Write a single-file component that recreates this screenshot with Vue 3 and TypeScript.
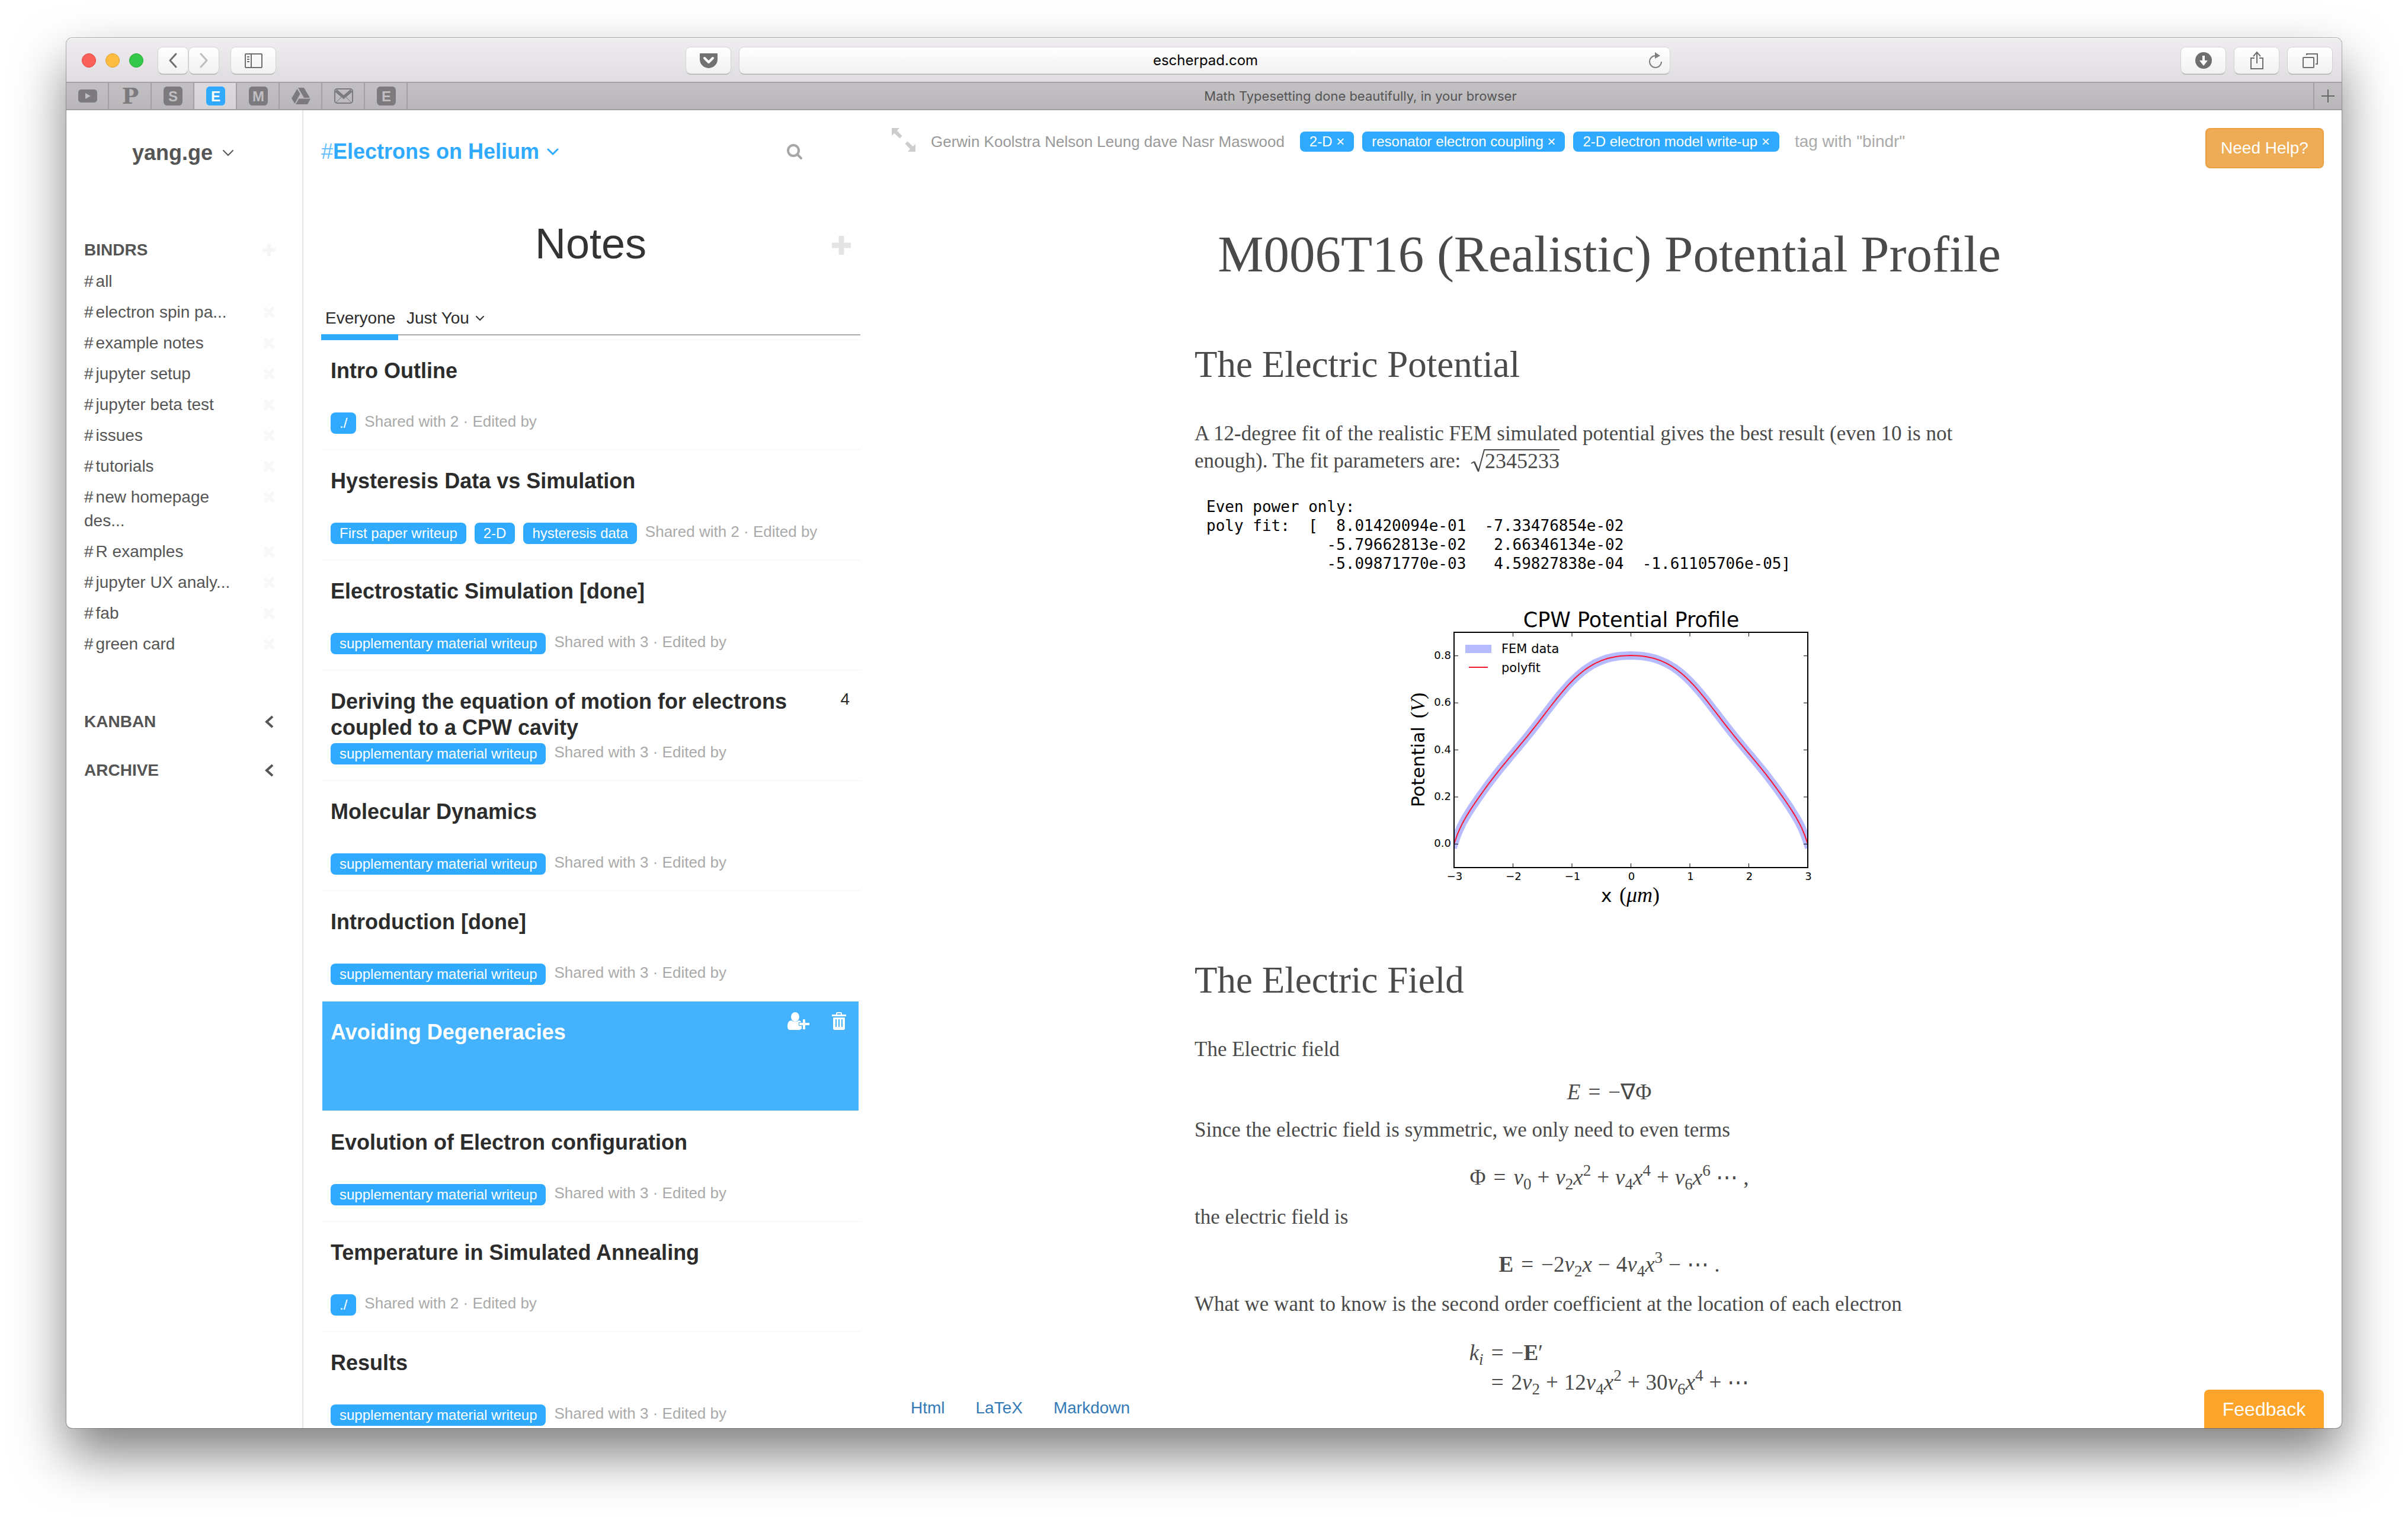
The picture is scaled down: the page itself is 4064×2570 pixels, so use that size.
<script setup lang="ts">
interface Bindr {
  name: string
  removable: boolean
}

interface Note {
  title: string
  tags: string[]
  shared?: number
  badge?: number
  selected?: boolean
}

const bindrs: Bindr[] = [
  { name: 'all', removable: false },
  { name: 'electron spin pa...', removable: true },
  { name: 'example notes', removable: true },
  { name: 'jupyter setup', removable: true },
  { name: 'jupyter beta test', removable: true },
  { name: 'issues', removable: true },
  { name: 'tutorials', removable: true },
  { name: 'new homepage des...', removable: true },
  { name: 'R examples', removable: true },
  { name: 'jupyter UX analy...', removable: true },
  { name: 'fab', removable: true },
  { name: 'green card', removable: true },
]

const supplementary = 'supplementary material writeup'

const notes: Note[] = [
  { title: 'Intro Outline', tags: ['./'], shared: 2 },
  { title: 'Hysteresis Data vs Simulation', tags: ['First paper writeup', '2-D', 'hysteresis data'], shared: 2 },
  { title: 'Electrostatic Simulation [done]', tags: [supplementary], shared: 3 },
  {
    title: 'Deriving the equation of motion for electrons coupled to a CPW cavity',
    tags: [supplementary],
    shared: 3,
    badge: 4,
  },
  { title: 'Molecular Dynamics', tags: [supplementary], shared: 3 },
  { title: 'Introduction [done]', tags: [supplementary], shared: 3 },
  { title: 'Avoiding Degeneracies', tags: [], selected: true },
  { title: 'Evolution of Electron configuration', tags: [supplementary], shared: 3 },
  { title: 'Temperature in Simulated Annealing', tags: ['./'], shared: 2 },
  { title: 'Results', tags: [supplementary], shared: 3 },
]

const noteTags: string[] = ['2-D', 'resonator electron coupling', '2-D electron model write-up']

const fitOutput = [
  'Even power only:',
  'poly fit:  [  8.01420094e-01  -7.33476854e-02',
  '             -5.79662813e-02   2.66346134e-02',
  '             -5.09871770e-03   4.59827838e-04  -1.61105706e-05]',
].join('\n')

// Plot geometry, in the figure's own units
const axes = { left: 78, top: 47, width: 597, height: 397 }
const coefficients = [
  8.01420094e-1, -7.33476854e-2, -5.79662813e-2, 2.66346134e-2, -5.0987177e-3, 4.59827838e-4, -1.61105706e-5,
]

function potential(x: number): number {
  return coefficients.reduce((sum, c, i) => sum + c * Math.pow(x, 2 * i), 0)
}

function px(x: number): number {
  return axes.left + ((x + 3) / 6) * axes.width
}

function py(v: number): number {
  return axes.top + (0.9 - v) * axes.height
}

const curve = Array.from({ length: 121 }, (_, i) => {
  const x = -3 + i * 0.05
  return `${px(x).toFixed(1)},${py(potential(x)).toFixed(1)}`
}).join(' ')

const xTicks = [-3, -2, -1, 0, 1, 2, 3]
const yTicks = [0, 0.2, 0.4, 0.6, 0.8]

function tickLabel(n: number): string {
  return n < 0 ? `−${-n}` : `${n}`
}
</script>

<template>
  <div class="desktop">
    <div class="window">
      <header class="toolbar">
        <div class="toolbar-left">
          <div class="lights">
            <span class="light red"></span>
            <span class="light amber"></span>
            <span class="light green"></span>
          </div>
          <div class="history">
            <button class="chrome-btn narrow" aria-label="Back">
              <svg width="16" height="32" viewBox="0 0 16 32" fill="none" stroke="#6e6e6e" stroke-width="3" stroke-linecap="round" stroke-linejoin="round"><path d="M13 5 3 16l10 11" /></svg>
            </button>
            <button class="chrome-btn narrow" aria-label="Forward">
              <svg width="16" height="32" viewBox="0 0 16 32" fill="none" stroke="#bdbdbd" stroke-width="3" stroke-linecap="round" stroke-linejoin="round"><path d="m3 5 10 11L3 27" /></svg>
            </button>
          </div>
          <button class="chrome-btn" aria-label="Show sidebar">
            <svg width="30" height="32" viewBox="0 0 30 32" fill="none" stroke="#6e6e6e" stroke-width="2"><rect x="1" y="5" width="28" height="23" rx="1" /><path d="M11 5v23M4 10h4M4 14h4M4 18h4" /></svg>
          </button>
        </div>
        <div class="toolbar-center">
          <button class="chrome-btn" aria-label="Save to Pocket">
            <svg width="30" height="26" viewBox="0 0 30 26"><path d="M1 1h28a1 1 0 0 1 1 1v9a15 15 0 0 1-30 0V2a1 1 0 0 1 1-1z" fill="#737173" /><path d="m8 9 7 7 7-7" fill="none" stroke="#fff" stroke-width="4" stroke-linecap="round" stroke-linejoin="round" /></svg>
          </button>
          <div class="address">
            <input class="url" type="text" value="escherpad.com" aria-label="Address" />
            <button class="reload" aria-label="Reload">
              <svg width="26" height="28" viewBox="0 0 26 28"><path d="M13 6a10 10 0 1 0 10 10" fill="none" stroke="#808080" stroke-width="2" /><path d="M12 0v11l9-5z" fill="#808080" /></svg>
            </button>
          </div>
        </div>
        <div class="toolbar-right">
          <button class="chrome-btn" aria-label="Downloads">
            <svg width="28" height="28" viewBox="0 0 28 28"><circle cx="14" cy="14" r="14" fill="#6e6e6e" /><path d="M12 6h4v8h5l-7 9-7-9h5z" fill="#fff" /></svg>
          </button>
          <button class="chrome-btn" aria-label="Share">
            <svg width="24" height="32" viewBox="0 0 24 32" fill="none" stroke="#6e6e6e" stroke-width="2"><path d="M8 12H2v18h20V12h-6M12 21V2M6 9l6-7 6 7" /></svg>
          </button>
          <button class="chrome-btn" aria-label="Show all tabs">
            <svg width="26" height="26" viewBox="0 0 26 26" fill="none" stroke="#6e6e6e" stroke-width="2"><rect x="1" y="8" width="18" height="17" rx="1" /><path d="M7 4V2h18v17h-3" /></svg>
          </button>
        </div>
      </header>

      <nav class="tabbar" aria-label="Browser tabs">
        <a href="#" class="pin" aria-label="YouTube">
          <svg width="32" height="22" viewBox="0 0 32 22"><rect width="32" height="22" rx="5" fill="#7c7a7d" /><path d="m12 6 9 5-9 5z" fill="#c0bec1" /></svg>
        </a>
        <a href="#" class="pin"><span class="fav-serif">P</span></a>
        <a href="#" class="pin"><span class="fav">S</span></a>
        <a href="#" class="pin active"><span class="fav blue">E</span></a>
        <a href="#" class="pin"><span class="fav">M</span></a>
        <a href="#" class="pin" aria-label="Drive">
          <svg width="32" height="28" viewBox="0 0 32 28" fill="#7c7a7d"><path d="M11 0h10l10 17H21zM9.500 2l5 8.500L5.500 27 0 18zM12.500 18.500H32L27 28H7z" /></svg>
        </a>
        <a href="#" class="pin" aria-label="Mail">
          <svg width="32" height="26" viewBox="0 0 32 26" fill="none" stroke="#7c7a7d"><rect x="1" y="1" width="30" height="24" rx="4" stroke-width="2" /><path d="m3 4 13 11L29 4" stroke-width="5" /><path d="m3 24 10-10M29 24 19 14" stroke-width="1" /></svg>
        </a>
        <a href="#" class="pin"><span class="fav">E</span></a>
        <a href="#" class="page-tab">Math Typesetting done beautifully, in your browser</a>
        <button class="new-tab" aria-label="New tab">
          <svg width="24" height="24" viewBox="0 0 24 24" stroke="#666" stroke-width="2"><path d="M12 1v22M1 12h22" /></svg>
        </button>
      </nav>

      <main class="workspace">
        <aside class="sidebar">
          <button class="account">
            yang.ge
            <svg width="20" height="12" viewBox="0 0 20 12" fill="none" stroke="#555" stroke-width="2" stroke-linecap="round"><path d="m2 2 8 8 8-8" /></svg>
          </button>
          <div class="section-head">
            <h2>BINDRS</h2>
            <button class="mark" aria-label="Add bindr">
              <svg width="22" height="22" viewBox="0 0 22 22" stroke="#f5f5f5" stroke-width="6" stroke-linecap="round"><path d="M11 3v16M3 11h16" /></svg>
            </button>
          </div>
          <ul class="bindrs">
            <li v-for="b in bindrs" :key="b.name">
              <a href="#"><span class="hash">#</span>{{ b.name }}</a>
              <button v-if="b.removable" class="mark" :aria-label="`Remove ${b.name}`">
                <svg width="20" height="20" viewBox="0 0 20 20" stroke="#f8f8f8" stroke-width="6" stroke-linecap="round"><path d="m4 4 12 12M16 4 4 16" /></svg>
              </button>
            </li>
          </ul>
          <div v-for="name in ['KANBAN', 'ARCHIVE']" :key="name" class="section-head closed">
            <h2>{{ name }}</h2>
            <button class="mark" :aria-label="`Open ${name}`">
              <svg width="14" height="22" viewBox="0 0 14 22" fill="none" stroke="#555" stroke-width="4"><path d="M13 2 3 11l10 9" /></svg>
            </button>
          </div>
        </aside>

        <section class="notes">
          <div class="notes-top">
            <button class="bindr-title">
              <span class="light-hash">#</span>Electrons on Helium
              <svg width="22" height="14" viewBox="0 0 22 14" fill="none" stroke="#2faaff" stroke-width="3" stroke-linecap="round"><path d="m3 3 8 8 8-8" /></svg>
            </button>
            <button class="search" aria-label="Search notes">
              <svg width="28" height="28" viewBox="0 0 28 28" fill="none" stroke="#a6a6a6" stroke-width="4" stroke-linecap="round"><circle cx="12" cy="12" r="9" /><path d="m19 19 6 6" /></svg>
            </button>
          </div>
          <div class="notes-heading">
            <h1>Notes</h1>
            <button class="add-note" aria-label="Add note">
              <svg width="32" height="32" viewBox="0 0 32 32" stroke="#e4e4e4" stroke-width="9" stroke-linejoin="round" fill="none"><path d="M16 0v32M0 16h32" /></svg>
            </button>
          </div>
          <div class="tabs">
            <button class="tab current">Everyone</button>
            <div class="tabs-rest">
              <button class="tab">
                Just You
                <svg width="16" height="12" viewBox="0 0 16 12" fill="none" stroke="#333" stroke-width="2" stroke-linecap="round"><path d="m2 3 6 6 6-6" /></svg>
              </button>
            </div>
          </div>
          <ul class="note-list">
            <li v-for="n in notes" :key="n.title" class="note" :class="{ selected: n.selected }">
              <a href="#" class="note-title">{{ n.title }}</a>
              <div class="note-side">
                <span v-if="n.badge" class="badge">{{ n.badge }}</span>
                <template v-if="n.selected">
                  <button aria-label="Share note">
                    <svg width="38" height="30" viewBox="0 0 38 30" fill="#fff"><ellipse cx="13" cy="8" rx="7" ry="8" /><path d="M7 14c3 3 9 3 12 0 2 0 4 1 4 3h-4v6h5v5q-2 2-5 2H5q-5 0-5-6c0-6 2-10 7-10zM26 12h4v6h7v4h-7v7h-4v-7h-6v-4h6z" /></svg>
                  </button>
                  <button aria-label="Delete note">
                    <svg width="26" height="30" viewBox="0 0 26 30"><path d="M8 4V2q0-2 2-2h6q2 0 2 2v2h7v3H1V4zM3 9h20v18q0 3-3 3H6q-3 0-3-3z" fill="#fff" /><path d="M10 2h6v2h-6z" fill="#44b2fd" /><path d="M8 12v13M13 12v13M18 12v13" stroke="#44b2fd" stroke-width="2" /></svg>
                  </button>
                </template>
              </div>
              <div v-if="n.shared" class="note-meta">
                <span v-for="t in n.tags" :key="t" class="tag small">{{ t }}</span>
                <span class="shared">Shared with {{ n.shared }} · Edited by</span>
              </div>
            </li>
          </ul>
        </section>

        <section class="pane">
          <div class="pane-top">
            <button class="expand" aria-label="Expand">
              <svg width="40" height="40" viewBox="0 0 40 40" fill="#cdcdcd"><path d="M0 0h13L9 4.500l8.500 9-4 4L4.500 9 0 13zM40 40H27l4-4.500-8.500-9 4-4 9 8.500 4.500-4z" /></svg>
            </button>
            <span class="authors">Gerwin Koolstra Nelson Leung dave Nasr Maswood</span>
            <div class="pane-tags">
              <span v-for="t in noteTags" :key="t" class="tag">{{ t }} <button :aria-label="`Remove ${t}`">×</button></span>
            </div>
            <input class="tag-input" type="text" placeholder='tag with "bindr"' aria-label="Add tag" />
            <button class="help">Need Help?</button>
          </div>

          <article class="doc">
            <h1>M006T16 (Realistic) Potential Profile</h1>
            <h2>The Electric Potential</h2>
            <p>
              A 12-degree fit of the realistic FEM simulated potential gives the best result (even 10 is not enough).
              The fit parameters are: <span class="sqrt"><svg width="24" height="40" viewBox="0 0 24 40" fill="none" stroke="#4a4a4a"><path d="m1 24 5-3" stroke-width="2" /><path d="m6 21 7 16" stroke-width="3" /><path d="M13 38 23 1h1" stroke-width="2" /></svg><span class="radicand">2345233</span></span>
            </p>
            <pre>{{ fitOutput }}</pre>

            <svg class="figure" width="700" height="524" viewBox="-10 0 700 524" role="img" aria-label="CPW Potential Profile">
              <defs>
                <clipPath id="plot-area"><rect :x="axes.left" :y="axes.top" :width="axes.width" :height="axes.height" /></clipPath>
              </defs>
              <text x="377" y="38" font-size="35" text-anchor="middle">CPW Potential Profile</text>
              <g clip-path="url(#plot-area)" fill="none">
                <polyline :points="curve" stroke="#b6bcff" stroke-width="14" stroke-linecap="square" />
                <polyline :points="curve" stroke="#ff1530" stroke-width="2" />
              </g>
              <rect :x="axes.left" :y="axes.top" :width="axes.width" :height="axes.height" fill="none" stroke="#000" stroke-width="2" />
              <g v-for="t in xTicks" :key="`x${t}`">
                <path :d="`M${px(t)} 47v7M${px(t)} 444v-7`" stroke="#000" stroke-width="1" />
                <text :x="px(t) + 1" y="465" font-size="18" text-anchor="middle">{{ tickLabel(t) }}</text>
              </g>
              <g v-for="t in yTicks" :key="`y${t}`">
                <path :d="`M78 ${py(t)}h7M675 ${py(t)}h-7`" stroke="#000" stroke-width="1" />
                <text x="73" :y="py(t) + 5" font-size="18" text-anchor="end">{{ t.toFixed(1) }}</text>
              </g>
              <rect x="97" y="68" width="44" height="14" fill="#b6bcff" />
              <path d="M103 106h32" stroke="#ff1530" stroke-width="2" />
              <text x="158" y="82" font-size="21">FEM data</text>
              <text x="158" y="114" font-size="21">polyfit</text>
              <text x="326" y="502" font-size="31">x</text>
              <text x="357" y="502" font-size="36" class="math">(<tspan font-style="italic">μm</tspan>)</text>
              <g transform="translate(28 342) rotate(-90)">
                <text x="0" y="0" font-size="31">Potential</text>
                <text x="150" y="0" font-size="34" class="math">(<tspan font-style="italic">V</tspan>)</text>
              </g>
            </svg>

            <h2 class="after-figure">The Electric Field</h2>
            <p>The Electric field</p>
            <div class="eq first"><i>E</i><b class="op rel">=</b>−∇Φ</div>
            <p>Since the electric field is symmetric, we only need to even terms</p>
            <div class="eq">Φ<b class="op rel">=</b><i>v</i><sub>0</sub><b class="op">+</b><i>v</i><sub>2</sub><i>x</i><sup>2</sup><b class="op">+</b><i>v</i><sub>4</sub><i>x</i><sup>4</sup><b class="op">+</b><i>v</i><sub>6</sub><i>x</i><sup>6</sup> ⋯ ,</div>
            <p>the electric field is</p>
            <div class="eq"><strong>E</strong><b class="op rel">=</b>−2<i>v</i><sub>2</sub><i>x</i><b class="op">−</b>4<i>v</i><sub>4</sub><i>x</i><sup>3</sup><b class="op">−</b>⋯ .</div>
            <p>What we want to know is the second order coefficient at the location of each electron</p>
            <div class="eq aligned">
              <span><i>k</i><sub><i>i</i></sub></span>
              <span><b class="op rel">=</b>−<strong>E</strong>′</span>
              <span></span>
              <span><b class="op rel">=</b>2<i>v</i><sub>2</sub><b class="op">+</b>12<i>v</i><sub>4</sub><i>x</i><sup>2</sup><b class="op">+</b>30<i>v</i><sub>6</sub><i>x</i><sup>4</sup><b class="op">+</b>⋯</span>
            </div>
          </article>

          <nav class="exports" aria-label="Export">
            <a href="#">Html</a>
            <a href="#">LaTeX</a>
            <a href="#">Markdown</a>
          </nav>
          <button class="feedback">Feedback</button>
        </section>
      </main>
    </div>
  </div>
</template>

<style>
body {
  margin: 0;
  background: #fff;
}
</style>

<style scoped>
* {
  box-sizing: border-box;
}

.desktop {
  height: 100vh;
  padding: 64px 112px 160px;
  overflow: hidden;
  background: #fff;
  font-family: "Liberation Sans", Arial, sans-serif;
  font-size: 28px;
  line-height: 40px;
  color: #555;
}

button,
input {
  padding: 0;
  border: 0;
  background: none;
  font: inherit;
  color: inherit;
}

a {
  color: inherit;
  text-decoration: none;
}

h1,
h2,
p,
pre,
ul {
  margin: 0;
  padding: 0;
  list-style: none;
}

svg {
  display: block;
  flex: none;
}

.window {
  display: flex;
  flex-direction: column;
  height: 100%;
  overflow: hidden;
  border-radius: 10px;
  background: #fff;
  box-shadow: 0 0 0 1px rgba(0, 0, 0, 0.28), 0 44px 88px rgba(0, 0, 0, 0.5);
}

/* Browser chrome */
.toolbar {
  display: grid;
  flex: none;
  grid-template-columns: 1046fr 1660fr 1134fr;
  align-items: center;
  height: 74px;
  padding-top: 2px;
  background: linear-gradient(#efedf0, #dfdde0);
  box-shadow: inset 0 2px 0 #f8f7f8;
}

.toolbar-left,
.toolbar-center,
.toolbar-right,
.lights,
.history {
  display: flex;
  align-items: center;
}

.toolbar-left {
  gap: 21px;
  padding-left: 26px;
}

.lights {
  gap: 16px;
  margin-right: 4px;
}

.light {
  width: 24px;
  height: 24px;
  border: 1px solid;
  border-radius: 50%;
}

.red {
  border-color: #e2463f;
  background: #fc605b;
}

.amber {
  border-color: #dfa035;
  background: #fdbc40;
}

.green {
  border-color: #27aa35;
  background: #34c84a;
}

.history {
  gap: 2px;
}

.chrome-btn,
.address {
  display: flex;
  align-items: center;
  justify-content: center;
  height: 44px;
  border-radius: 8px;
  background: linear-gradient(#fff, #f1f1f1);
  box-shadow: 0 0 0 1px #d3d1d4, 0 2px 0 #b0aeb1;
}

.chrome-btn {
  flex: none;
  width: 75px;
}

.chrome-btn.narrow {
  width: 50px;
}

.toolbar-center {
  gap: 15px;
}

.address {
  flex: 1;
  padding: 0 11px 0 40px;
}

.url {
  flex: 1;
  min-width: 0;
  height: 40px;
  font-family: Inter, sans-serif;
  font-size: 24px;
  color: #000;
  text-align: center;
}

.toolbar-right {
  justify-content: flex-end;
  gap: 15px;
  padding-right: 16px;
}

.tabbar {
  display: flex;
  flex: none;
  height: 48px;
  border-top: 2px solid #a4a2a5;
  border-bottom: 2px solid #a2a0a3;
  background: linear-gradient(#c2c0c3, #b9b7ba);
}

.pin {
  display: flex;
  align-items: center;
  justify-content: center;
  width: 72px;
  padding-left: 2px;
  border-right: 2px solid #a2a0a3;
}

.pin.active {
  background: linear-gradient(#dcdadd, #d5d3d6);
}

.fav {
  width: 32px;
  height: 32px;
  border-radius: 6px;
  background: #7c7a7d;
  font-size: 24px;
  font-weight: bold;
  line-height: 33px;
  text-align: center;
  color: #c0bec1;
}

.fav.blue {
  background: #2faaff;
  color: #fff;
}

.fav-serif {
  font-family: "DejaVu Serif", serif;
  font-size: 38px;
  font-weight: bold;
  color: #7c7a7d;
}

.page-tab {
  flex: 1;
  font-family: Inter, sans-serif;
  font-size: 22px;
  line-height: 44px;
  text-align: center;
  color: #555;
}

.new-tab {
  display: flex;
  align-items: center;
  justify-content: center;
  width: 48px;
  border-left: 2px solid #a2a0a3;
}

/* Sidebar */
.workspace {
  display: flex;
  flex: 1;
  min-height: 0;
}

.sidebar {
  flex: none;
  width: 400px;
  padding: 50px 44px 0 30px;
  border-right: 2px solid #e5e5e5;
}

.account {
  display: flex;
  align-items: center;
  justify-content: center;
  gap: 16px;
  width: 100%;
  height: 44px;
  margin-bottom: 122px;
  padding-left: 10px;
  font-size: 36px;
  font-weight: bold;
}

.section-head {
  display: flex;
  align-items: center;
  justify-content: space-between;
  margin-bottom: 13px;
}

.section-head h2 {
  font-size: 28px;
}

.section-head.closed {
  margin-bottom: 42px;
}

.mark {
  display: flex;
  align-items: center;
  justify-content: center;
  width: 24px;
  height: 40px;
}

.bindrs {
  margin-bottom: 91px;
}

.bindrs li {
  display: flex;
  justify-content: space-between;
  margin-bottom: 12px;
}

.bindrs a {
  width: 252px;
}

.hash {
  margin-right: 4px;
}

/* Notes column */
.notes {
  flex: none;
  width: 968px;
  padding: 48px 28px 0 30px;
  overflow: hidden;
}

.notes-top {
  display: flex;
  align-items: center;
  justify-content: space-between;
  height: 44px;
  padding-right: 97px;
}

.bindr-title {
  display: flex;
  align-items: center;
  font-size: 36px;
  font-weight: bold;
  color: #2faaff;
}

.bindr-title svg {
  margin-left: 12px;
}

.light-hash {
  font-weight: normal;
  opacity: 0.75;
}

.notes-heading {
  display: grid;
  grid-template-columns: 48px 1fr 48px;
  align-items: center;
  margin: 93px 0 66px;
}

.notes-heading h1 {
  grid-column: 2;
  font-size: 72px;
  font-weight: normal;
  line-height: 80px;
  text-align: center;
  color: #333;
}

.add-note {
  padding-top: 6px;
}

.tabs {
  display: flex;
  height: 57px;
  color: #2c2c2c;
  box-shadow: inset 0 -2px 0 #f9f9f9;
}

.tab {
  display: flex;
  align-items: center;
  gap: 10px;
  height: 40px;
}

.tab.current {
  width: 130px;
  height: 57px;
  padding: 0 0 7px 7px;
  border-bottom: 10px solid #2faaff;
}

.tabs-rest {
  flex: 1;
  margin-bottom: 8px;
  padding-left: 14px;
  border-bottom: 2px solid #a9a9a9;
}

.note {
  display: grid;
  grid-template-columns: 1fr auto;
  grid-template-rows: 88px 36px;
  row-gap: 4px;
  height: 186px;
  padding: 30px 18px 0 16px;
  border-bottom: 2px solid #f9f9f9;
}

.note.selected {
  margin: 0 3px 0 2px;
  padding: 30px 20px 0 14px;
  border-bottom-color: #fff;
  background: #44b2fd;
  background-clip: padding-box;
}

.note-title {
  font-size: 36px;
  font-weight: bold;
  line-height: 44px;
  color: #2c2c2c;
}

.selected .note-title {
  color: #fff;
}

.note-side {
  display: flex;
  gap: 36px;
  align-items: flex-start;
  margin-top: -12px;
}

.badge {
  margin-top: 10px;
  color: #2c2c2c;
}

.note-meta {
  display: flex;
  grid-column: 1 / -1;
  gap: 14px;
  align-items: flex-start;
}

.tag {
  flex: none;
  padding: 0 16px;
  border-radius: 8px;
  background: #2faaff;
  font-size: 24px;
  line-height: 34px;
  white-space: nowrap;
  color: #fff;
}

.tag.small {
  padding: 0 15px;
  line-height: 36px;
}

.shared {
  font-size: 26px;
  line-height: 30px;
  white-space: nowrap;
  color: #aaa;
}

/* Document pane */
.pane {
  position: relative;
  flex: 1;
  min-width: 0;
  overflow: hidden;
}

.pane-top {
  display: flex;
  align-items: flex-start;
  height: 130px;
  padding: 30px 30px 0 25px;
}

.authors {
  margin: 3px 26px 0;
  font-size: 26px;
  white-space: nowrap;
  color: #999;
}

.pane-tags {
  display: flex;
  gap: 14px;
  margin-top: 6px;
}

.tag-input {
  flex: 1;
  height: 40px;
  margin: 3px 26px 0;
}

.tag-input::placeholder {
  color: #aaa;
}

.help {
  width: 200px;
  height: 68px;
  border: 2px solid #eb9f3e;
  border-radius: 8px;
  background: #eeac56;
  color: #fff;
}

.doc {
  max-width: 1400px;
  margin: 0 auto;
  font-family: "Liberation Serif", Georgia, serif;
  font-size: 35px;
  line-height: 46px;
  color: #4a4a4a;
}

.doc h1 {
  margin-top: 63px;
  font-size: 87px;
  font-weight: normal;
  line-height: 100px;
  text-align: center;
}

.doc h2 {
  margin: 98px 0 56px;
  font-size: 63px;
  font-weight: normal;
  line-height: 76px;
}

.doc .after-figure {
  margin-top: 72px;
}

.sqrt {
  display: inline-flex;
  align-items: flex-start;
  height: 43px;
  margin-left: 8px;
  vertical-align: bottom;
}

.radicand {
  height: 38px;
  border-top: 2px solid #4a4a4a;
  font-size: 36px;
  line-height: 36px;
}

pre {
  margin: 38px 0 53px 20px;
  font-family: "DejaVu Sans Mono", monospace;
  font-size: 26px;
  line-height: 32px;
  color: #000;
}

.figure {
  margin: 0 auto;
  font-family: "DejaVu Sans", sans-serif;
}

.math {
  font-family: "Liberation Serif", serif;
}

.eq {
  margin: 34px 0 21px;
  font-size: 37px;
  text-align: center;
  white-space: nowrap;
}

.eq.first {
  margin: 26px 0 18px;
}

.eq sub,
.eq sup {
  font-size: 27px;
  line-height: 0;
}

.eq sub {
  vertical-align: -8px;
}

.eq sup {
  vertical-align: 15px;
}

.op {
  margin: 0 10px;
  font-weight: normal;
}

.op.rel {
  margin: 0 13px;
}

.aligned {
  display: grid;
  grid-template-columns: auto auto;
  justify-content: center;
  line-height: 50px;
  text-align: left;
}

.exports {
  position: absolute;
  bottom: 14px;
  left: 57px;
  display: flex;
  gap: 52px;
  color: #337ab7;
}

.feedback {
  position: absolute;
  right: 30px;
  bottom: 0;
  width: 202px;
  height: 65px;
  border-radius: 8px 8px 0 0;
  background: #fda52b;
  font-size: 32px;
  color: #fff;
}
</style>
